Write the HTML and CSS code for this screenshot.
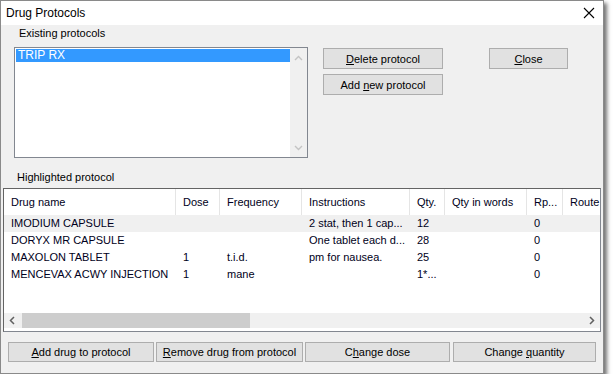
FILE: index.html
```html
<!DOCTYPE html>
<html lang="en">

<head>
    <meta charset="UTF-8">
    <title>Drug Protocols</title>
    <link rel="stylesheet" href="styles.css">
</head>

<body>
    <div class="window">
        <!-- title bar -->
        <div class="titlebar">
            <span class="title">Drug Protocols</span>
            <svg class="close-x" width="12" height="12" viewBox="0 0 12 12">
                <path d="M1 1 L11 11 M11 1 L1 11" stroke="#000" stroke-width="1.1" fill="none"/>
            </svg>
        </div>

        <div class="content">
            <div class="label top-label">Existing protocols</div>

            <div class="top-row">
                <div class="listbox">
                    <div class="listbox-items">
                        <div class="lb-item selected">TRIP RX</div>
                    </div>
                    <div class="vscroll">
                        <svg width="9" height="6" viewBox="0 0 9 6"><path d="M1 5 L4.5 1.5 L8 5" stroke="#c4c4c4" stroke-width="1.4" fill="none"/></svg>
                        <svg width="9" height="6" viewBox="0 0 9 6"><path d="M1 1 L4.5 4.5 L8 1" stroke="#c4c4c4" stroke-width="1.4" fill="none"/></svg>
                    </div>
                </div>
                <div class="btn-col">
                    <button class="btn btn-wide"><u>D</u>elete protocol</button>
                    <button class="btn btn-wide">Add <u>n</u>ew protocol</button>
                </div>
                <button class="btn btn-close"><u>C</u>lose</button>
            </div>

            <div class="label mid-label">Highlighted protocol</div>

            <!-- drug list -->
            <div class="listview">
                <div class="lv-body">
                    <div class="lv-row lv-head">
                        <div class="c c1">Drug name</div>
                        <div class="c c2">Dose</div>
                        <div class="c c3">Frequency</div>
                        <div class="c c4">Instructions</div>
                        <div class="c c5">Qty.</div>
                        <div class="c c6">Qty in words</div>
                        <div class="c c7">Rp...</div>
                        <div class="c c8">Route</div>
                    </div>
                    <div class="lv-row hot">
                        <div class="c c1">IMODIUM CAPSULE</div>
                        <div class="c c2"></div>
                        <div class="c c3"></div>
                        <div class="c c4">2 stat, then 1 cap...</div>
                        <div class="c c5">12</div>
                        <div class="c c6"></div>
                        <div class="c c7">0</div>
                        <div class="c c8"></div>
                    </div>
                    <div class="lv-row">
                        <div class="c c1">DORYX MR CAPSULE</div>
                        <div class="c c2"></div>
                        <div class="c c3"></div>
                        <div class="c c4">One tablet each d...</div>
                        <div class="c c5">28</div>
                        <div class="c c6"></div>
                        <div class="c c7">0</div>
                        <div class="c c8"></div>
                    </div>
                    <div class="lv-row">
                        <div class="c c1">MAXOLON TABLET</div>
                        <div class="c c2">1</div>
                        <div class="c c3">t.i.d.</div>
                        <div class="c c4">pm for nausea.</div>
                        <div class="c c5">25</div>
                        <div class="c c6"></div>
                        <div class="c c7">0</div>
                        <div class="c c8"></div>
                    </div>
                    <div class="lv-row">
                        <div class="c c1">MENCEVAX ACWY INJECTION</div>
                        <div class="c c2">1</div>
                        <div class="c c3">mane</div>
                        <div class="c c4"></div>
                        <div class="c c5">1*...</div>
                        <div class="c c6"></div>
                        <div class="c c7">0</div>
                        <div class="c c8"></div>
                    </div>
                </div>
                <div class="hscroll">
                    <svg class="arrow" width="6" height="9" viewBox="0 0 6 9"><path d="M5 1 L1.5 4.5 L5 8" stroke="#606060" stroke-width="1.5" fill="none"/></svg>
                    <div class="thumb-track"><div class="thumb"></div></div>
                    <svg class="arrow" width="6" height="9" viewBox="0 0 6 9"><path d="M1 1 L4.5 4.5 L1 8" stroke="#606060" stroke-width="1.5" fill="none"/></svg>
                </div>
            </div>

            <div class="bottom-row">
                <button class="btn btn-b1"><u>A</u>dd drug to protocol</button>
                <button class="btn btn-b2"><u>R</u>emove drug from protocol</button>
                <button class="btn btn-b3">C<u>h</u>ange dose</button>
                <button class="btn btn-b4">Change <u>q</u>uantity</button>
            </div>
        </div>
    </div>
</body>

</html>
```

FILE: styles.css
```css
* {
    margin: 0;
    padding: 0;
    box-sizing: border-box;
}

body {
    background: #fff;
    font-family: "Liberation Sans", Arial, sans-serif;
    font-size: 11px;
    color: #000;
}

.window {
    width: 604px;
    height: 374px;
    border: 1px solid #8a8a8a;
    background: #f0f0f0;
    box-shadow: 3px 3px 4px rgba(0, 0, 0, 0.55);
    display: flex;
    flex-direction: column;
}

.titlebar {
    height: 24px;
    background: #fff;
    display: flex;
    align-items: center;
    justify-content: space-between;
    padding: 0 8px 0 5px;
}

.title {
    font-size: 12px;
}

.content {
    flex: 1;
    display: flex;
    flex-direction: column;
}

.label {
    height: 13px;
    line-height: 13px;
}

.top-label {
    margin: 2px 0 0 18px;
}

.top-row {
    display: flex;
    align-items: flex-start;
    margin-top: 7px;
}

.listbox {
    width: 294px;
    height: 111px;
    margin-left: 13px;
    border: 1px solid #828790;
    background: #fff;
    display: flex;
}

.listbox-items {
    flex: 1;
    padding: 1px 0 0 1px;
}

.lb-item {
    height: 13px;
    line-height: 13px;
    padding-left: 2px;
    font-size: 12px;
}

.lb-item.selected {
    background: #3399ff;
    color: #fff;
}

.vscroll {
    width: 17px;
    background: #f0f0f0;
    display: flex;
    flex-direction: column;
    justify-content: space-between;
    align-items: center;
    padding: 7px 0 6px;
}

.btn {
    font-family: "Liberation Sans", Arial, sans-serif;
    font-size: 11px;
    color: #000;
    background: #e1e1e1;
    border: 1px solid #adadad;
    height: 21px;
}

.btn-col {
    display: flex;
    flex-direction: column;
    gap: 5px;
    margin: 1px 0 0 15px;
}

.btn-wide {
    width: 120px;
}

.btn-close {
    width: 79px;
    margin: 1px 0 0 46px;
}

.mid-label {
    margin: 13px 0 0 16px;
}

.listview {
    margin: 4px 2px 0 2px;
    height: 144px;
    border: 1px solid #828790;
    border-left-color: #646464;
    border-top-color: #646464;
    background: #fff;
    display: flex;
    flex-direction: column;
}

.lv-body {
    flex: 1;
    overflow: hidden;
}

.lv-row {
    display: flex;
    height: 17px;
    line-height: 17px;
    white-space: nowrap;
}

.lv-head {
    height: 26px;
    line-height: 26px;
    color: #000;
}

.lv-head .c {
    border-right: 1px solid #e5e5e5;
}

.hot {
    background: #f0f0f0;
}

.c {
    padding-left: 7px;
    overflow: hidden;
    flex: none;
    color: #000020;
}

.c1 { width: 172px; }
.c2 { width: 44px; }
.c3 { width: 82px; }
.c4 { width: 108px; }
.c5 { width: 35px; }
.c6 { width: 82px; }
.c7 { width: 36px; }
.c8 { width: 40px; }

.hscroll {
    height: 15px;
    margin-bottom: 3px;
    background: #f0f0f0;
    display: flex;
    align-items: center;
}

.hscroll .arrow {
    margin: 0 5px;
}

.thumb-track {
    flex: 1;
    height: 15px;
}

.thumb {
    width: 228px;
    height: 15px;
    background: #cdcdcd;
    margin-left: 2px;
}

.bottom-row {
    display: flex;
    gap: 2px;
    margin: 10px 0 0 7px;
}

.bottom-row .btn {
    height: 20px;
}

.btn-b1 { width: 146px; }
.btn-b2 { width: 147px; }
.btn-b3 { width: 145px; }
.btn-b4 { width: 143px; margin-left: 1px; }
```
